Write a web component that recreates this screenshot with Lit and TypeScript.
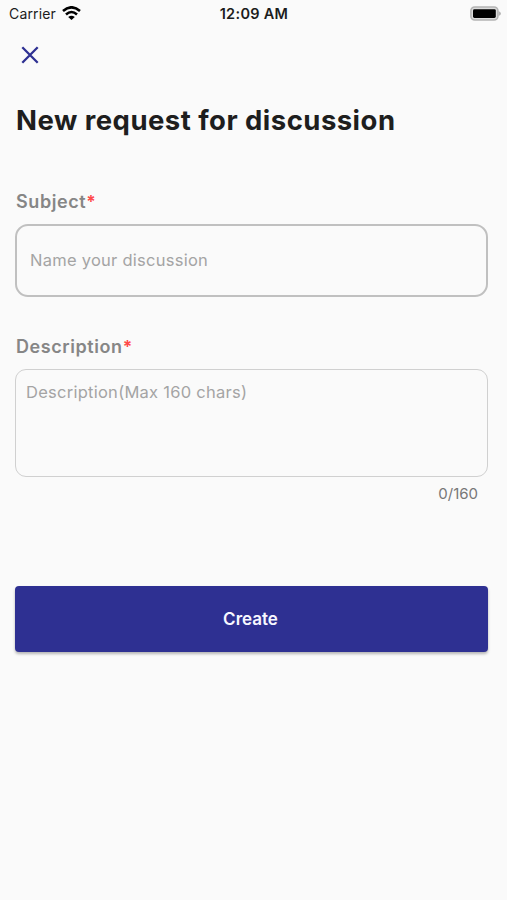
import { LitElement, html, css } from "lit";
import { customElement } from "lit/decorators.js";

@customElement("status-bar")
class StatusBar extends LitElement {
  static styles = css`
    :host { display: grid; grid-template-columns: 1fr auto 1fr; align-items: center; height: 26px; padding: 0 6px 2px 9px; color: #1c1c1c; }
    .carrier { display: flex; align-items: center; gap: 6px; font-size: 14px; letter-spacing: 0.15px; }
    .time { font-size: 14.5px; font-weight: 600; letter-spacing: 0.3px; margin-right: 2px; }
    .battery { justify-self: end; }
    svg { display: block; }
    .wifi { margin-top: -1px; }
  `;
  render() {
    return html`
      <div class="carrier">
        <span>Carrier</span>
        <svg class="wifi" width="19" height="14" viewBox="0 0 19 14">
          <g fill="none" stroke="#000" stroke-width="2.6">
            <path d="M1 4.9Q9.5 -2.3 18 4.9" />
            <path d="M4 8.5Q9.5 3.5 15 8.5" />
          </g>
          <path d="M6.2 10.9Q9.5 8.4 12.8 10.9L9.5 14Z" />
        </svg>
      </div>
      <span class="time">12:09 AM</span>
      <div class="battery">
        <svg width="31" height="15" viewBox="0 0 31 15">
          <rect x="0.9" y="1" width="27" height="13" rx="3.8" fill="#dcdcdc" stroke="#b4b4b4" stroke-width="1.6" />
          <rect x="3" y="3.2" width="22.8" height="8.8" rx="1.4" />
          <path d="M28.5 5Q31 6 31 7.5T28.5 10Z" fill="#b4b4b4" />
        </svg>
      </div>
    `;
  }
}

@customElement("field-label")
class FieldLabel extends LitElement {
  static styles = css`
    :host { display: block; height: 24px; line-height: 24px; font-size: 18px; font-weight: 600; letter-spacing: 0.58px; color: #868686; }
    .star { color: #ff4b4b; font-size: 17px; font-weight: 700; }
  `;
  render() {
    return html`<slot></slot><span class="star">*</span>`;
  }
}

@customElement("app-root")
class AppRoot extends LitElement {
  static styles = css`
    :host { display: block; min-height: 900px; box-sizing: border-box; background: #fafafa; font-family: Inter, "Liberation Sans", sans-serif; }
    .close { display: block; margin: 18px 0 0 21px; padding: 0; border: 0; background: none; width: 18px; height: 18px; }
    .close svg { display: block; }
    form { display: flex; flex-direction: column; padding: 0 19px 0 15px; }
    h1 { margin: 38px 0 0 1px; height: 36px; line-height: 36px; font-size: 27.5px; font-weight: 700; letter-spacing: 0.47px; color: #1e1e1e; white-space: nowrap; }
    field-label { margin-left: 1px; }
    .subject-label { margin-top: 52px; }
    .description-label { margin-top: 38px; }
    input, textarea { box-sizing: border-box; width: 473px; margin: 0; background: transparent; font: 400 16.5px/22px Inter, "Liberation Sans", sans-serif; letter-spacing: 0.26px; outline: none; resize: none; }
    ::placeholder { color: #a4a4a4; opacity: 1; }
    input { height: 73px; margin-top: 10px; padding: 0 13px 1px; border: 2px solid #c0c0c0; border-radius: 13px; }
    textarea { display: block; height: 108px; margin-top: 10px; padding: 11px 10px; border: 1px solid #d0d0d0; border-radius: 11px; overflow: hidden; }
    .counter { align-self: flex-end; margin: 7px 10px 0 0; line-height: 20px; font-size: 15px; color: #777; }
    .create { width: 473px; height: 66px; margin: 82px 0 0; padding: 0 2px 1px 0; border: 0; border-radius: 4px; background: #2e3092; color: #f7f7ff; font: 600 17px/24px Inter, "Liberation Sans", sans-serif; box-shadow: 0 2px 3px rgba(0, 0, 0, 0.28); }
  `;
  render() {
    return html`
      <status-bar></status-bar>
      <button class="close" aria-label="Close">
        <svg width="18" height="18" viewBox="0 0 18 18"><path d="M1.3 1.3L16.7 16.7M16.7 1.3L1.3 16.7" stroke="#2e3092" stroke-width="2.3" /></svg>
      </button>
      <form>
        <h1>New request for discussion</h1>
        <field-label class="subject-label">Subject</field-label>
        <input placeholder="Name your discussion" aria-label="Subject" />
        <field-label class="description-label">Description</field-label>
        <textarea placeholder="Description(Max 160 chars)" aria-label="Description" maxlength="160"></textarea>
        <div class="counter">0/160</div>
        <button class="create" type="button">Create</button>
      </form>
    `;
  }
}
